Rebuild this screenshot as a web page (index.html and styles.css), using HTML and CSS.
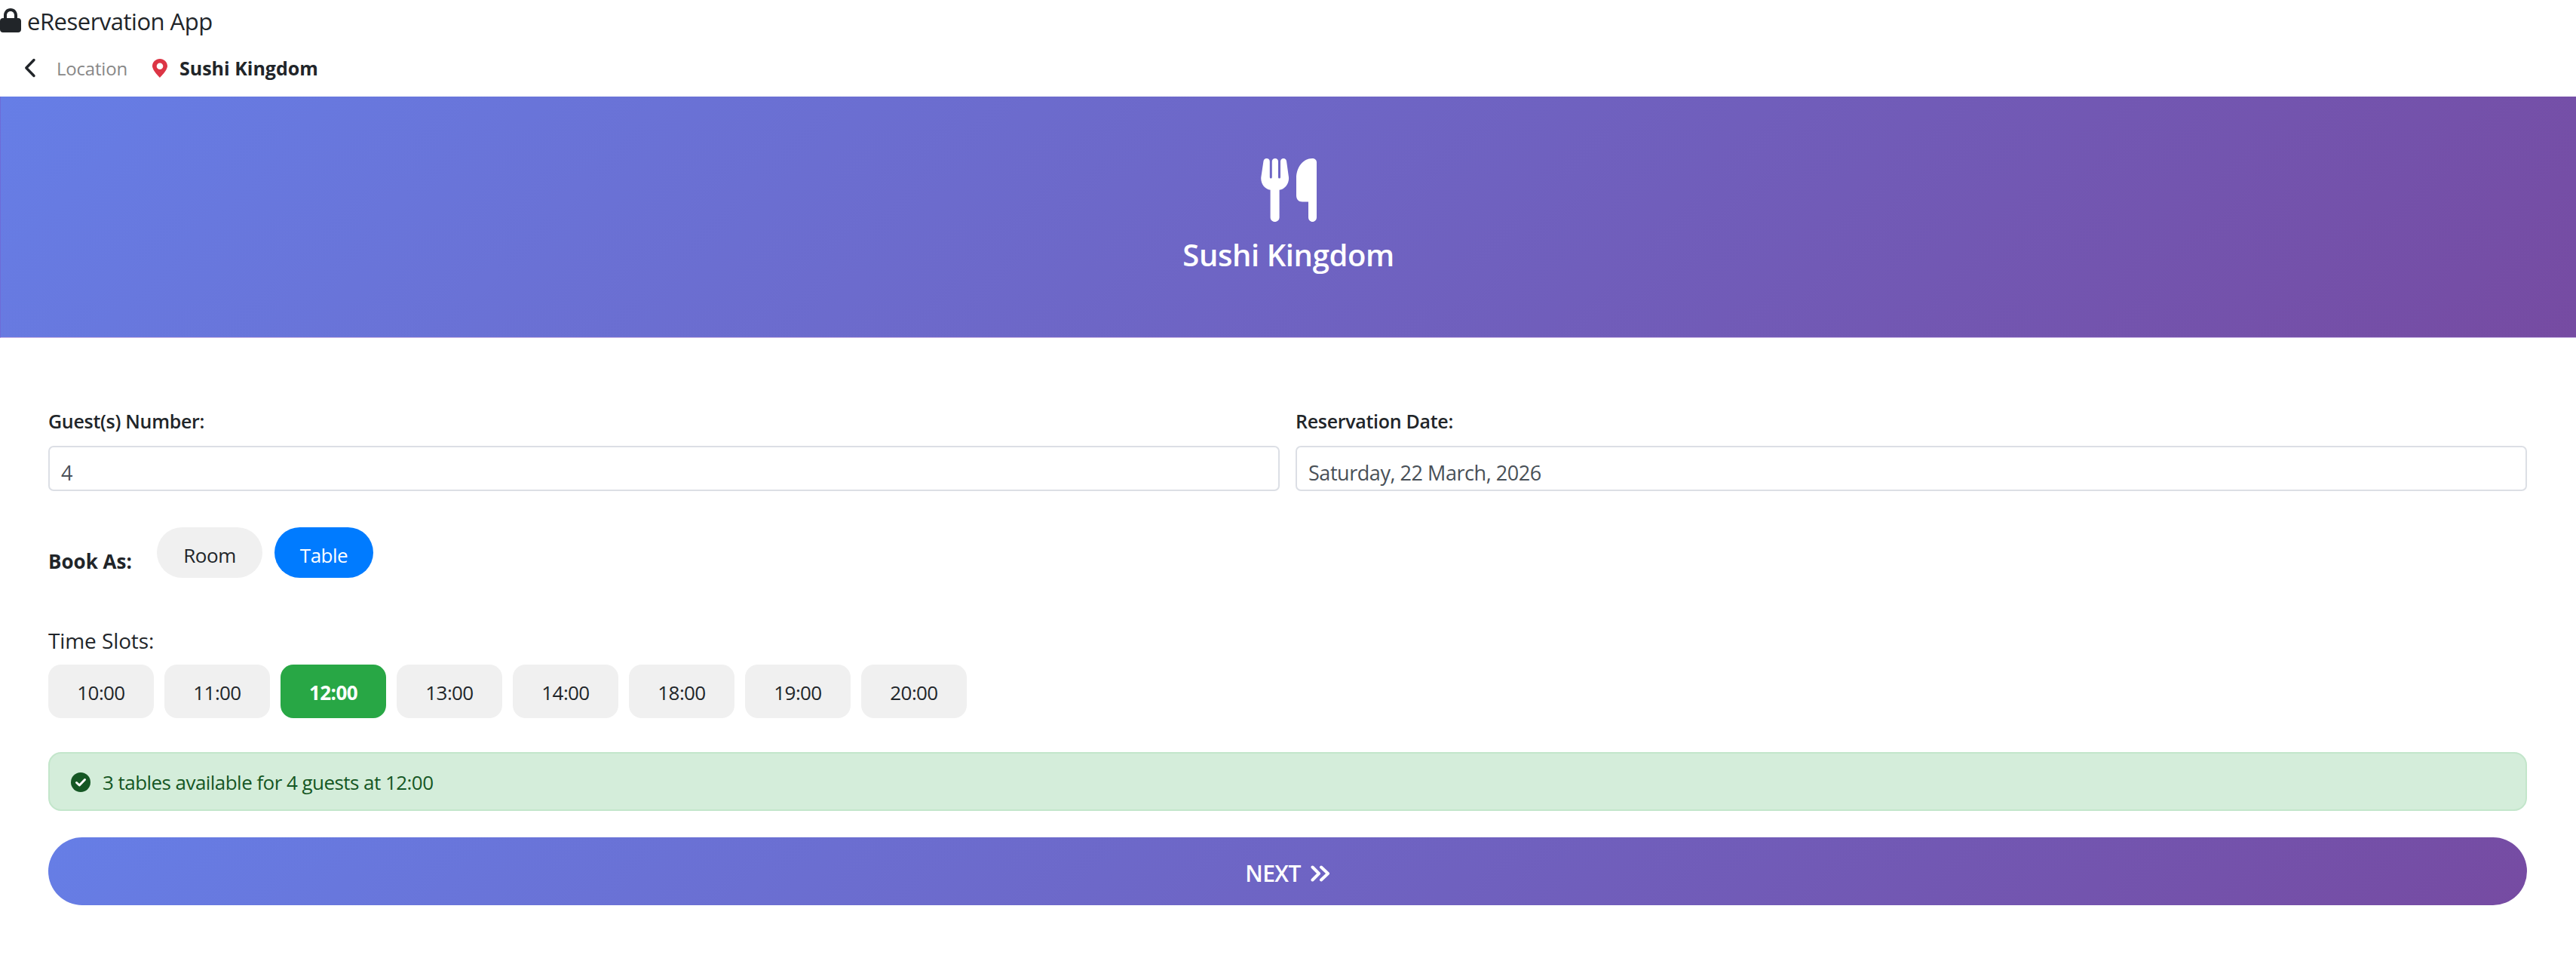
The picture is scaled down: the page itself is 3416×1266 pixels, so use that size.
FILE: index.html
```html
<!DOCTYPE html>
<html lang="en">
<head>
  <meta charset="UTF-8" />
  <title>eReservation App</title>
  <meta name="viewport" content="width=device-width,initial-scale=1" />
  <link rel="stylesheet" href="styles.css">
</head>
<body>
  <div class="app-title">
    <svg class="lock-icon" viewBox="0 0 28 32"><path fill="#212529" d="M14 0C8.5 0 5 4.2 5 9.5V13H4c-2.4 0-4 1.6-4 4v11c0 2.4 1.6 4 4 4h20c2.400 0 4-1.600 4-4V17c0-2.400-1.600-4-4-4h-1V9.500C23 4.200 19.500 0 14 0zm0 4c3.200 0 5 2.400 5 5.500V13H9V9.500C9 6.400 10.800 4 14 4z"/></svg>
    <span>eReservation App</span>
  </div>

  <nav class="crumbs">
    <svg class="back-icon" viewBox="0 0 16 26"><path fill="none" stroke="#212529" stroke-width="3.400" stroke-linecap="round" stroke-linejoin="round" d="M13 2.500 2.800 13 13 23.500"/></svg>
    <span class="crumb-link">Location</span>
    <svg class="pin-icon" viewBox="0 0 20 25"><path fill="#dc3545" fill-rule="evenodd" d="M10 25S20 15.500 20 9.600C20 4.300 15.500 0 10 0S0 4.300 0 9.600C0 15.500 10 25 10 25zm0-11a4.300 4.300 0 1 1 0-8.600 4.300 4.300 0 0 1 0 8.600z"/></svg>
    <strong class="crumb-current">Sushi Kingdom</strong>
  </nav>

  <header class="hero">
    <svg class="utensils" viewBox="0 0 74 84"><path fill="#fff" d="M7.500 0C10 0 11.800 1.500 11.800 4V25a1.500 1.500 0 0 0 3 0V4C14.800 1.500 16.800 0 19 0 21 0 23 1.500 23 4V25a1.500 1.500 0 0 0 3 0V4C26 1.500 28 0 30 0 32.200 0 33.600 1.500 34 3.500L37 25C37.800 33 32 41 24.600 41.800V78C24.600 81.500 22 84 18.600 84 15.200 84 12.600 81.500 12.600 78V41.800C5 41-.5 33 .3 25L3.500 3.500C4 1.500 5.400 0 7.500 0ZM68 0C71.500 0 74 2 74 5V78C74 81.500 71.500 84 68.500 84 65.500 84 63 81.500 63 78V57.500H55C50 57.500 47 54 47 49V26C47 12 56 0 68 0Z"/></svg>
    <h1>Sushi Kingdom</h1>
  </header>

  <main class="booking">
    <div class="field-row">
      <div class="field">
        <label for="guests">Guest(s) Number:</label>
        <input id="guests" type="text" value="4">
      </div>
      <div class="field">
        <label for="date">Reservation Date:</label>
        <input id="date" type="text" value="Saturday, 22 March, 2026">
      </div>
    </div>

    <div class="book-as">
      <span class="book-label">Book As:</span>
      <button class="pill">Room</button>
      <button class="pill active">Table</button>
    </div>

    <div class="slots-title">Time Slots:</div>
    <div class="slots">
      <button class="slot">10:00</button>
      <button class="slot">11:00</button>
      <button class="slot selected">12:00</button>
      <button class="slot">13:00</button>
      <button class="slot">14:00</button>
      <button class="slot">18:00</button>
      <button class="slot">19:00</button>
      <button class="slot">20:00</button>
    </div>

    <div class="notice">
      <svg class="check-icon" viewBox="0 0 26 26"><circle cx="13" cy="13" r="13" fill="#155724"/><path fill="none" stroke="#fff" stroke-width="3" stroke-linecap="round" stroke-linejoin="round" d="M7.500 13.500 11.300 17 18.500 9.500"/></svg>
      <span>3 tables available for 4 guests at 12:00</span>
    </div>

    <button class="next-btn">
      <span>NEXT</span>
      <svg class="next-icon" viewBox="0 0 26 22"><path fill="none" stroke="#fff" stroke-width="4" stroke-linecap="round" stroke-linejoin="round" d="M2.500 2.500 11 11 2.500 19.500M14 2.500 23 11 14 19.500"/></svg>
    </button>
  </main>
</body>
</html>
```

FILE: styles.css
```css
body {
  margin: 0;
  background: #fff;
  color: #212529;
  font-family: "Open Sans", "Noto Sans", sans-serif;
  font-size: 24px;
}
button, input {
  font-family: inherit;
}
.app-title {
  height: 56px;
  display: flex;
  align-items: center;
  gap: 8px;
  font-size: 31px;
  letter-spacing: -0.5px;
}
.lock-icon { width: 28px; height: 32px; margin-bottom: 2px; }

.crumbs {
  box-sizing: border-box;
  height: 72px;
  padding: 0 0 4px 32px;
  display: flex;
  align-items: center;
  font-size: 24px;
}
.back-icon { width: 16px; height: 26px; }
.crumb-link { color: #888; margin-left: 27px; letter-spacing: -0.2px; }
.pin-icon { width: 20px; height: 25px; margin-left: 33px; }
.crumb-current { margin-left: 16px; font-size: 25px; }

.hero {
  height: 319px;
  border-bottom: 1px solid #c7b1e2;
  border-left: 1px solid #6d6bd8;
  background: linear-gradient(135deg, #667ee6 0%, #764ba2 100%);
  display: flex;
  flex-direction: column;
  align-items: center;
  color: #fff;
}
.utensils { width: 74px; height: 84px; margin-top: 82px; }
.hero h1 {
  margin: 16px 0 0;
  font-size: 40px;
  line-height: 56px;
  font-weight: 600;
  letter-spacing: -0.4px;
}

.booking {
  padding: 95px 65px 66px 64px;
}
.field-row {
  display: grid;
  grid-template-columns: 1fr 1fr;
  column-gap: 21px;
}
.field label {
  display: block;
  height: 30px;
  line-height: 30px;
  margin-bottom: 18px;
  font-size: 25px;
  font-weight: 600;
  letter-spacing: -0.3px;
}
.field input {
  display: block;
  box-sizing: border-box;
  width: 100%;
  height: 60px;
  padding: 10px 15px 0;
  border: 2px solid #dcdfe5;
  border-radius: 7px;
  color: #495057;
  font-size: 27px;
  letter-spacing: -0.45px;
  outline: none;
}

.book-as {
  display: flex;
  gap: 16px;
  margin-top: 48px;
}
.book-label {
  width: 128px;
  align-self: flex-end;
  margin-bottom: 4px;
  line-height: 36px;
  font-size: 26px;
  font-weight: 700;
}
.pill {
  height: 67px;
  border: 0;
  border-radius: 34px;
  background: #f0f0f0;
  color: #212529;
  font-size: 26px;
  letter-spacing: -0.5px;
  width: 140px;
  padding: 6px 0 0;
}
.pill.active {
  width: 131px;
  background: #007bff;
  color: #fff;
}

.slots-title {
  height: 30px;
  line-height: 30px;
  margin: 68px 0 17px;
  font-size: 28px;
  font-weight: 500;
  letter-spacing: -0.1px;
}
.slots {
  display: flex;
  gap: 14px;
}
.slot {
  width: 140px;
  height: 71px;
  padding: 2px 0 0;
  border: 0;
  border-radius: 17px;
  background: #f0f0f0;
  color: #212529;
  font-size: 26px;
  letter-spacing: -0.6px;
}
.slot.selected {
  background: #28a745;
  color: #fff;
  font-weight: 700;
}

.notice {
  box-sizing: border-box;
  height: 78px;
  margin-top: 45px;
  padding: 2px 28px 0;
  display: flex;
  align-items: center;
  gap: 16px;
  background: #d4edda;
  border: 2px solid #c3e6cb;
  border-radius: 17px;
  color: #155724;
  font-size: 26px;
  letter-spacing: -0.55px;
}
.check-icon { width: 26px; height: 26px; }

.next-btn {
  width: 100%;
  height: 90px;
  margin-top: 35px;
  padding-top: 6px;
  border: 0;
  border-radius: 45px;
  background: linear-gradient(135deg, #667ee6 0%, #764ba2 100%);
  color: #fff;
  display: flex;
  align-items: center;
  justify-content: center;
  gap: 13px;
  font-size: 30px;
  font-weight: 600;
  letter-spacing: -0.6px;
}
.next-icon { width: 26px; height: 22px; }
```
